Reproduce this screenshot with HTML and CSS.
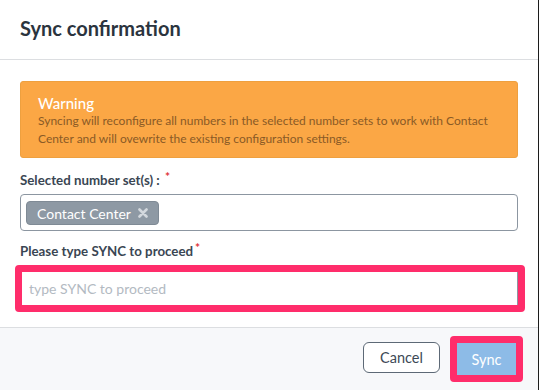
FILE: index.html
```html
<!DOCTYPE html>
<html lang="en">
<head>
    <meta charset="UTF-8">
    <title>Sync confirmation</title>
    <link rel="stylesheet" href="styles.css">
</head>
<body>

    <div class="modal">
        <!-- header -->
        <div class="modal-head">
            <h2>Sync confirmation</h2>
        </div>

        <!-- body -->
        <div class="modal-body">
            <div class="alert">
                <div class="alert-title">Warning</div>
                <p>Syncing will reconfigure all numbers in the selected number sets to work with Contact Center and will ovewrite the existing configuration settings.</p>
            </div>

            <label class="label">Selected number set(s) : <span class="req">*</span></label>
            <div class="select">
                <span class="tag">Contact Center
                    <svg class="tag-x" width="10" height="10" viewBox="0 0 10 10"><path d="M1.5 1.5 L8.5 8.5 M8.5 1.5 L1.5 8.5" stroke="#d3d8dd" stroke-width="2.6" stroke-linecap="round"/></svg>
                </span>
            </div>

            <label class="label label-input">Please type SYNC to proceed<span class="req">*</span></label>
            <div class="mark mark-input">
                <input type="text" placeholder="type SYNC to proceed">
            </div>
        </div>

        <!-- footer -->
        <div class="modal-foot">
            <button class="btn btn-cancel">Cancel</button>
            <span class="mark mark-btn">
                <button class="btn btn-sync">Sync</button>
            </span>
        </div>
    </div>

</body>
</html>
```

FILE: styles.css
```css
* {
    margin: 0;
    padding: 0;
    box-sizing: border-box;
}

body {
    background: #fff;
    font-family: 'Lato', 'Liberation Sans', sans-serif;
    width: 540px;
    height: 390px;
    overflow: hidden;
}

.modal {
    width: 539px;
    height: 390px;
    border-right: 1px solid #1c1c1c;
    background: #fff;
    display: flex;
    flex-direction: column;
}

.modal-head {
    height: 60px;
    padding: 16px 20px 0;
    border-bottom: 1px solid #dcdee1;
}

.modal-head h2 {
    font-size: 20px;
    font-weight: 700;
    color: #2b343e;
    line-height: 24px;
}

.modal-body {
    padding: 21px 20px 0;
    height: 268px;
    border-bottom: 1px solid #dcdee1;
}

.alert {
    background: #fba745;
    border: 1px solid #eea03f;
    border-radius: 3px;
    padding: 12px 17px 0;
    height: 77px;
}

.alert-title {
    color: #fff;
    font-size: 15px;
    line-height: 18px;
    font-weight: 500;
}

.alert p {
    color: #8a5a25;
    font-size: 12px;
    line-height: 18px;
}

.label {
    display: block;
    font-size: 13.3px;
    font-weight: 700;
    color: #3a4653;
    line-height: 17px;
    margin-top: 14px;
    margin-bottom: 5px;
}

.label-input {
    margin-top: 12px;
    margin-bottom: 5px;
}

.req {
    color: #e0333a;
    font-size: 12px;
    vertical-align: top;
    position: relative;
    top: -4px;
    margin-left: 2px;
}

.select {
    height: 37px;
    border: 1px solid #8c96a1;
    border-radius: 4px;
    padding: 6px 5px;
}

.tag {
    display: inline-flex;
    align-items: center;
    height: 24px;
    padding: 0 10px;
    background: #8e99a4;
    border: 1px solid #7f8a95;
    border-radius: 4px;
    color: #fff;
    font-size: 14px;
    gap: 7px;
}

.tag-x {
    display: block;
}

.mark {
    border: 7px solid #ff2d6b;
    border-radius: 4px;
}

.mark-input {
    margin: 0 -7px 0 -5px;
    height: 47px;
}

.mark-input input {
    width: 100%;
    height: 33px;
    border: none;
    border-right: 1px solid #8c96a1;
    margin-right: 1px;
    outline: none;
    padding: 0 7px;
    font-family: 'Lato', 'Liberation Sans', sans-serif;
    font-size: 14px;
    color: #333;
    background: #fff;
}

.mark-input input::placeholder {
    color: #b3bac2;
}

.modal-foot {
    flex: 1;
    background: #f7f8fa;
    display: flex;
    justify-content: flex-end;
    align-items: center;
    padding: 0 15px 0 0;
    gap: 10px;
}

.btn {
    font-family: 'Lato', 'Liberation Sans', sans-serif;
    font-size: 14.5px;
    cursor: pointer;
}

.btn-cancel {
    width: 77px;
    height: 31px;
    margin-top: -4px;
    background: #fff;
    color: #3d4956;
    border: 1px solid #5d6976;
    border-radius: 6px;
}

.mark-btn {
    display: block;
    margin-top: 0;
}

.btn-sync {
    display: block;
    width: 59px;
    height: 32px;
    background: #8dbbe7;
    color: #fff;
    border: none;
    border-radius: 0;
}
```
